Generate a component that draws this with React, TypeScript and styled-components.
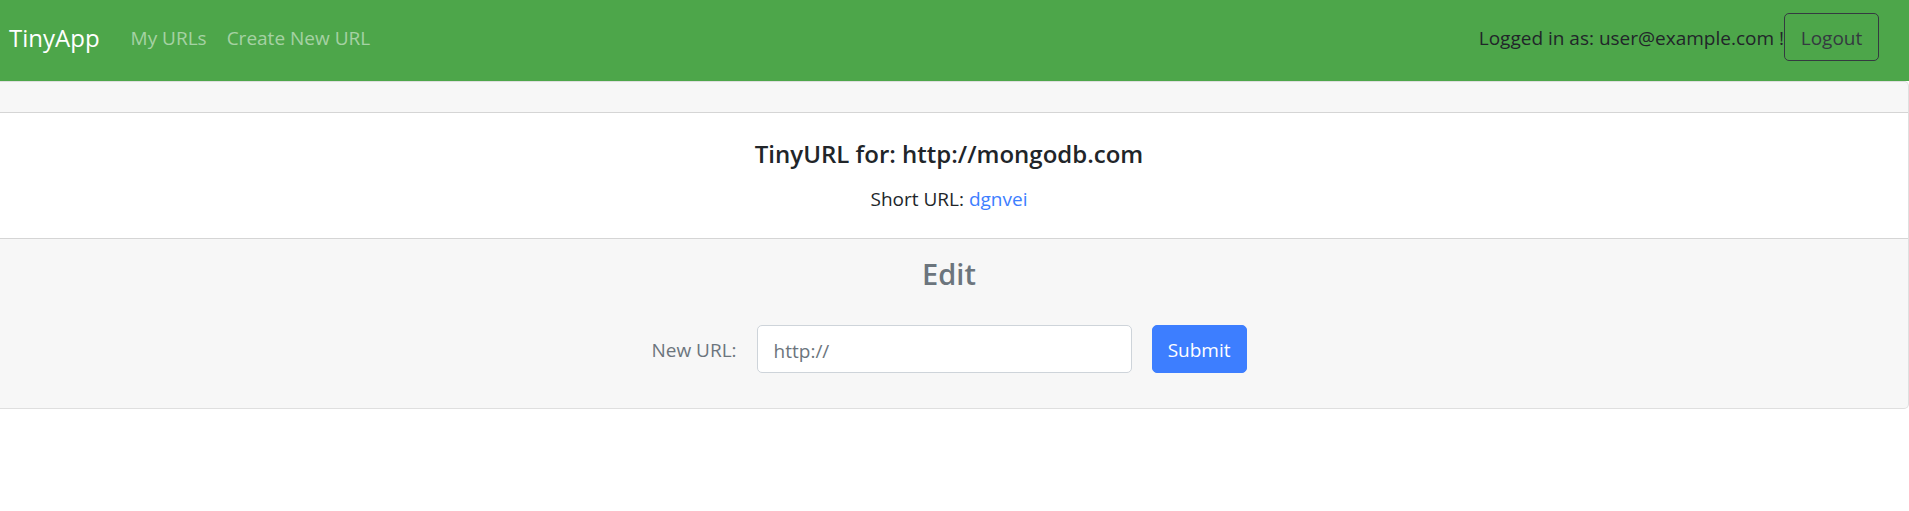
import React from 'react';
import styled, { createGlobalStyle } from 'styled-components';

const Global = createGlobalStyle`
  *, *::before, *::after { box-sizing: border-box; }
  body { margin: 0; background: #fff; color: #212529; font: 400 19px/30px "Open Sans", "Noto Sans", sans-serif; }
  h2, h5, p { margin: 0; }
`;
const Navbar = styled.nav`
  display: flex; align-items: flex-start; justify-content: space-between;
  padding: 13px 30px 20px 9px; background: #4da64a;
`;
const Group = styled.div`display: flex; align-items: center; min-height: 48px;`;
const Brand = styled.a`color: #fff; font-size: 24px; text-decoration: none; margin-right: 21px; padding-top: 2px;`;
const NavLink = styled.a`color: rgba(255,255,255,.5); text-decoration: none; padding: 2px 10px 0;`;
const UserText = styled.span`padding-top: 2px;`;
const Button = styled.button<{ $primary?: boolean }>`
  font: inherit; min-width: 95px; padding: 9px 14px 7px; border-radius: 5px; cursor: pointer;
  border: 1px solid ${p => (p.$primary ? '#3d7eff' : '#343a40')};
  background: ${p => (p.$primary ? '#3d7eff' : 'transparent')};
  color: ${p => (p.$primary ? '#fff' : '#343a40')};
`;
const Card = styled.main`
  border: 1px solid #dfdfdf; border-left: 0; border-radius: 0 5px 5px 0;
  text-align: center; background: #f7f7f7;
`;
const CardHeader = styled.div`height: 31px; border-bottom: 1px solid #d5d5d5;`;
const CardBody = styled.section`background: #fff; padding: 26px 10px 24px 0;`;
const Title = styled.h5`font-size: 24px; line-height: 30px; font-weight: 600; margin-bottom: 15px;`;
const ShortLink = styled.a`color: #3d7eff; text-decoration: none;`;
const CardFooter = styled.section`border-top: 1px solid #d5d5d5; color: #6c757d; padding: 15px 10px 35px 0;`;
const Heading = styled.h2`font-size: 29px; line-height: 40px; font-weight: 600; margin-bottom: 31px;`;
const Form = styled.form`display: flex; justify-content: center; align-items: center; gap: 20px;`;
const Label = styled.label`padding-top: 2px;`;
const Input = styled.input`
  font: inherit; width: 375px; height: 48px; padding: 10px 16px 6px; border: 1px solid #ced4da; border-radius: 5px;
  &::placeholder { color: #6c757d; opacity: 1; }
`;

export default function App() {
  return (
    <>
      <Global />
      <Navbar>
        <Group>
          <Brand href="#">TinyApp</Brand>
          <NavLink href="#">My URLs</NavLink>
          <NavLink href="#">Create New URL</NavLink>
        </Group>
        <Group>
          <UserText>Logged in as: user@example.com !</UserText>
          <Button type="button">Logout</Button>
        </Group>
      </Navbar>
      <Card>
        <CardHeader />
        <CardBody>
          <Title>TinyURL for: http://mongodb.com</Title>
          <p>Short URL: <ShortLink href="#">dgnvei</ShortLink></p>
        </CardBody>
        <CardFooter>
          <Heading>Edit</Heading>
          <Form>
            <Label htmlFor="longURL">New URL:</Label>
            <Input id="longURL" type="text" placeholder="http://" />
            <Button type="button" $primary>Submit</Button>
          </Form>
        </CardFooter>
      </Card>
    </>
  );
}
